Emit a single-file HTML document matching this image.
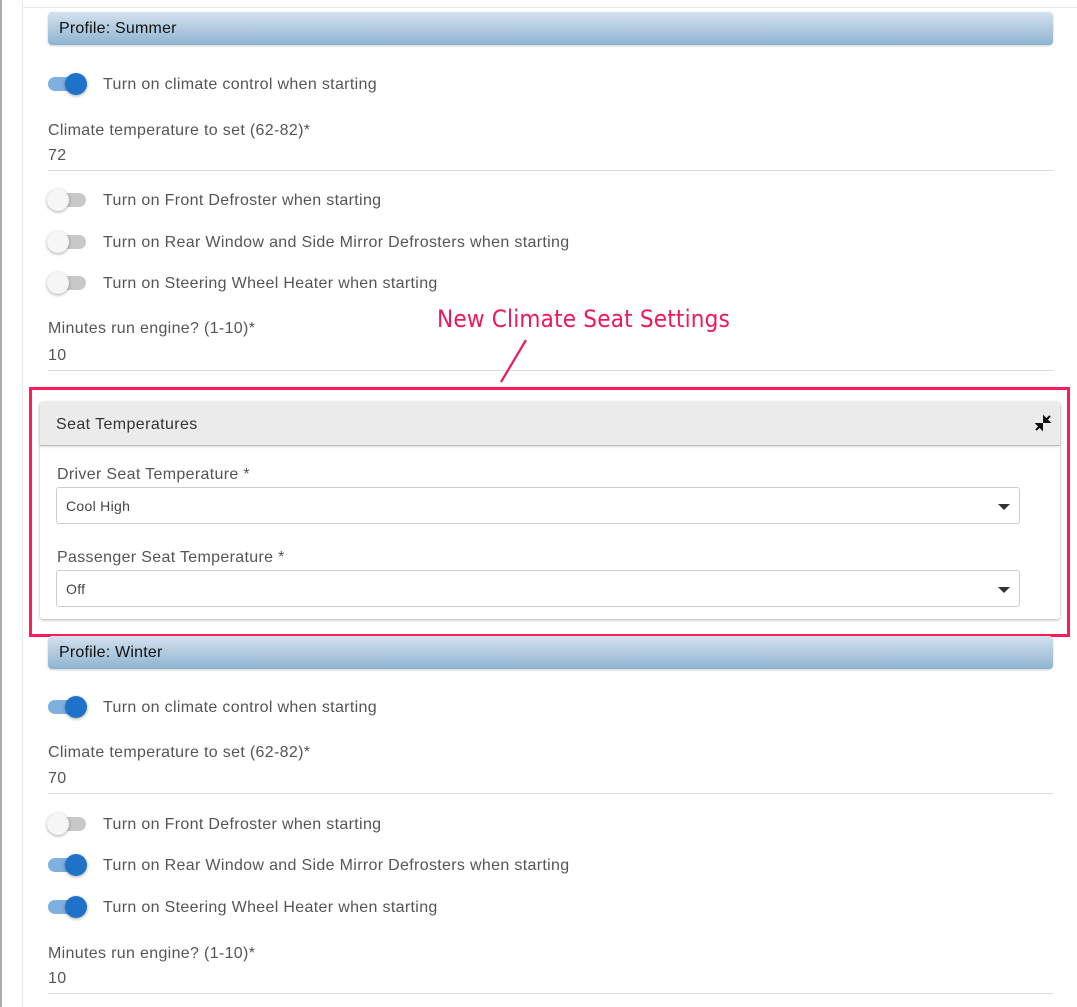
<!DOCTYPE html>
<html><head><meta charset="utf-8"><style>
*{margin:0;padding:0;box-sizing:border-box}
body{width:1077px;height:1007px;background:#fff;position:relative;overflow:hidden;font-family:"Liberation Sans",Roboto,sans-serif;}
.a{position:absolute}
.hdr{position:absolute;left:48px;width:1005px;height:33px;border-radius:4px;background:linear-gradient(#d3e2ee,#8fb3d0);box-shadow:0 1px 2px rgba(0,0,0,.2);font-size:16px;color:#111;padding-left:11px;line-height:34px;letter-spacing:.2px}
.tg{position:absolute;left:48px;width:38px;height:14px;border-radius:7px}
.tg.on{background:#7fb0e0}
.tg.off{background:#c8c8c8}
.tg i{position:absolute;top:-4px;width:22px;height:22px;border-radius:50%;box-shadow:0 1px 3px rgba(0,0,0,.35)}
.tg.on i{left:17px;background:#1e73c8}
.tg.off i{left:-1px;background:#f6f6f6}
.lt{position:absolute;left:103px;font-size:16px;color:#555;line-height:20px;letter-spacing:.33px;margin-top:1px}
.lb{position:absolute;left:48px;font-size:16px;color:#555;line-height:20px;letter-spacing:.33px;margin-top:1px}
.ln{position:absolute;left:48px;width:1005px;height:1px;background:#ddd}
.sel{position:absolute;left:56px;width:964px;height:37px;border:1px solid #ccc;border-radius:3px;font-size:14px;color:#444;padding-left:9px;line-height:36px;letter-spacing:.3px}
.sel:after{content:"";position:absolute;right:9px;top:16px;border-left:6px solid transparent;border-right:6px solid transparent;border-top:6px solid #333}
</style></head><body>
<div class="a" style="left:0;top:0;width:2px;height:1007px;background:#aaa"></div>
<div class="a" style="left:22px;top:0;width:1px;height:1007px;background:#e6e6e6"></div>
<div class="a" style="left:22px;top:7px;width:1055px;height:1px;background:#e8e8e8"></div>

<div class="hdr" style="top:12px">Profile: Summer</div>
<div class="tg on" style="top:77px"><i></i></div><div class="lt" style="top:74px">Turn on climate control when starting</div>
<div class="lb" style="top:120px">Climate temperature to set (62-82)*</div>
<div class="lb" style="top:145px">72</div><div class="ln" style="top:170px"></div>
<div class="tg off" style="top:193px"><i></i></div><div class="lt" style="top:190px">Turn on Front Defroster when starting</div>
<div class="tg off" style="top:235px"><i></i></div><div class="lt" style="top:232px">Turn on Rear Window and Side Mirror Defrosters when starting</div>
<div class="tg off" style="top:276px"><i></i></div><div class="lt" style="top:273px">Turn on Steering Wheel Heater when starting</div>
<div class="lb" style="top:318px">Minutes run engine? (1-10)*</div>
<div class="lb" style="top:345px">10</div><div class="ln" style="top:370px"></div>

<div class="a" style="left:437px;top:305px;font-size:24px;color:#f0175a;font-family:'DejaVu Sans Condensed','Liberation Sans Narrow',sans-serif;letter-spacing:.2px">New Climate Seat Settings</div>
<svg class="a" style="left:498px;top:338px" width="32" height="46"><line x1="28" y1="2" x2="3" y2="44" stroke="#f0175a" stroke-width="2.2"/></svg>

<div class="a" style="left:29px;top:387px;width:1041px;height:250px;border:3px solid #ff1a5c"></div>
<div class="a" style="left:40px;top:402px;width:1020px;height:217px;background:#fff;box-shadow:0 1px 3px rgba(0,0,0,.3);border-radius:3px"></div>
<div class="a" style="left:40px;top:402px;width:1020px;height:44px;background:#ebebeb;border-bottom:1px solid #bbb;box-shadow:0 1px 2px rgba(0,0,0,.15);font-size:16px;color:#333;padding-left:16px;line-height:46px;letter-spacing:.4px;border-radius:3px 3px 0 0">Seat Temperatures</div>
<svg class="a" style="left:1034px;top:414px" width="18" height="18" viewBox="0 0 18 18"><path d="M2 16 L7 11 M3 10 H8 V15 Z" stroke="#111" stroke-width="2" fill="#111"/><path d="M16 2 L11 7 M10 3 V8 H15 Z" stroke="#111" stroke-width="2" fill="#111"/></svg>
<div class="a" style="left:57px;top:466px;font-size:16px;color:#555;letter-spacing:.33px">Driver Seat Temperature *</div>
<div class="sel" style="top:487px">Cool High</div>
<div class="a" style="left:57px;top:549px;font-size:16px;color:#555;letter-spacing:.33px">Passenger Seat Temperature *</div>
<div class="sel" style="top:570px">Off</div>

<div class="hdr" style="top:636px">Profile: Winter</div>
<div class="tg on" style="top:700px"><i></i></div><div class="lt" style="top:697px">Turn on climate control when starting</div>
<div class="lb" style="top:742px">Climate temperature to set (62-82)*</div>
<div class="lb" style="top:768px">70</div><div class="ln" style="top:793px"></div>
<div class="tg off" style="top:817px"><i></i></div><div class="lt" style="top:814px">Turn on Front Defroster when starting</div>
<div class="tg on" style="top:858px"><i></i></div><div class="lt" style="top:855px">Turn on Rear Window and Side Mirror Defrosters when starting</div>
<div class="tg on" style="top:900px"><i></i></div><div class="lt" style="top:897px">Turn on Steering Wheel Heater when starting</div>
<div class="lb" style="top:943px">Minutes run engine? (1-10)*</div>
<div class="lb" style="top:968px">10</div><div class="ln" style="top:993px"></div>
</body></html>
